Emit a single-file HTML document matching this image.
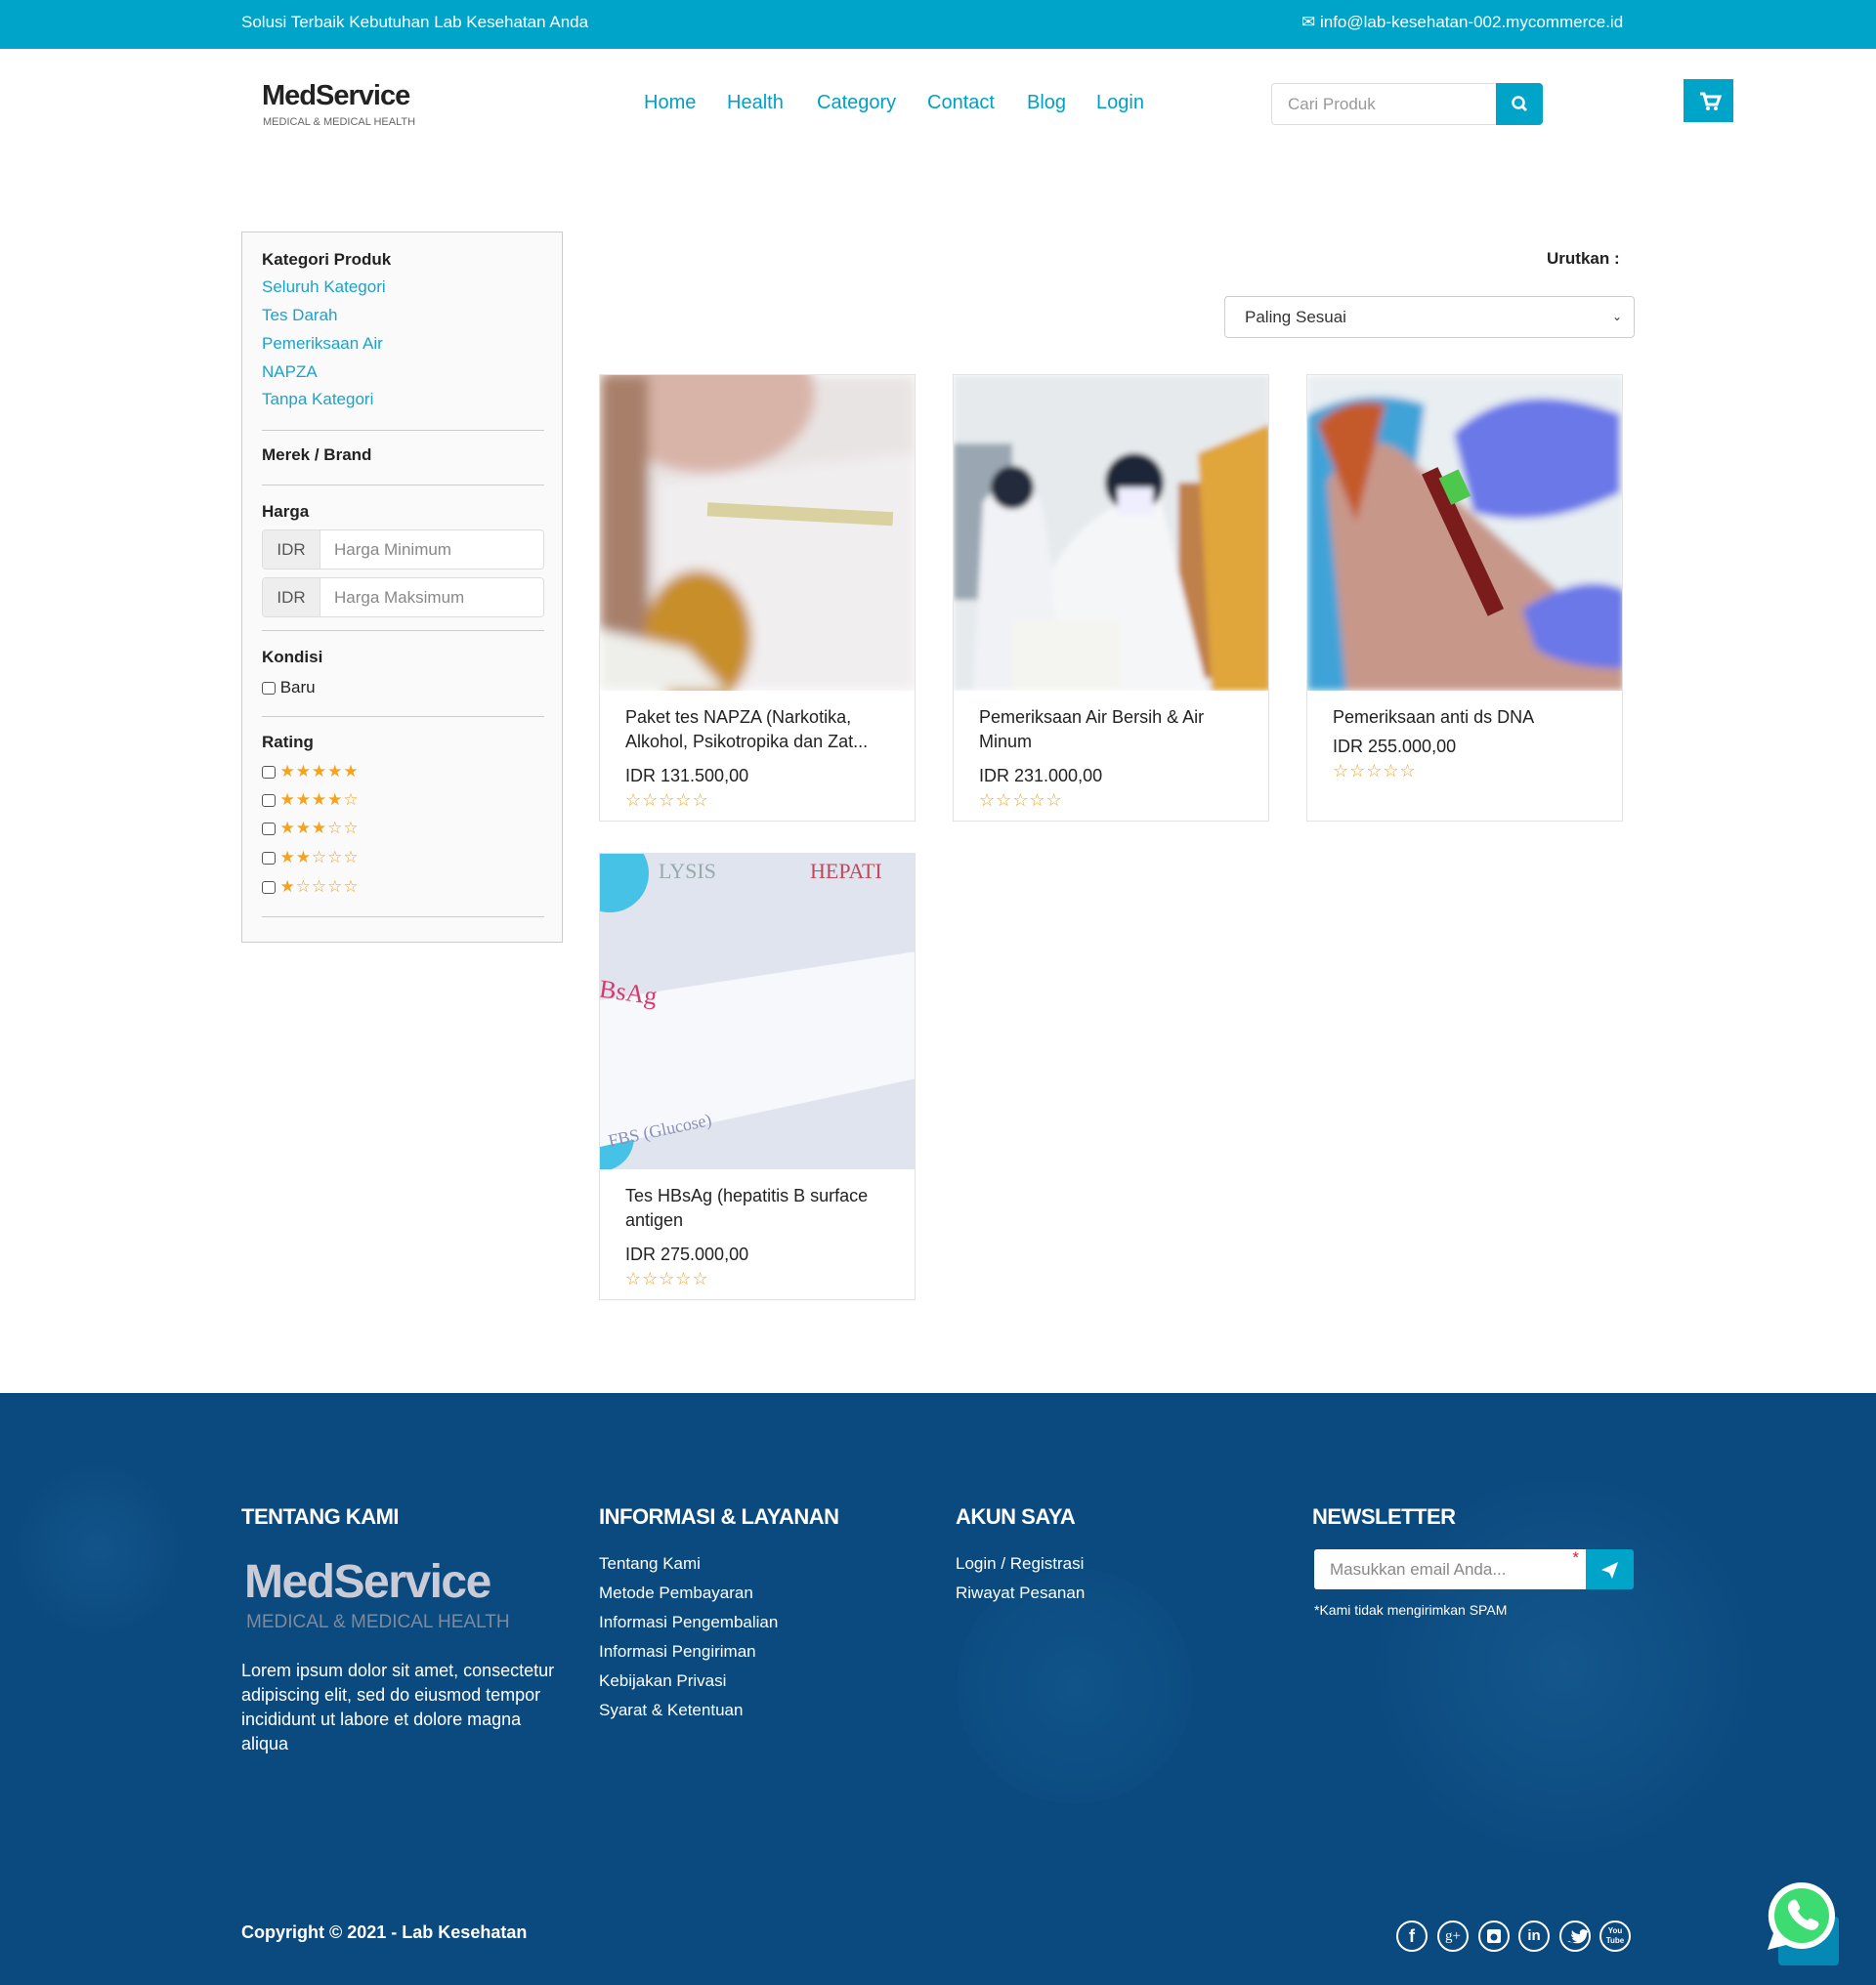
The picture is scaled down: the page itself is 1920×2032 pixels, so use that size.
<!DOCTYPE html>
<html><head><meta charset="utf-8"><style>
*{margin:0;padding:0;box-sizing:border-box}
body{width:1920px;height:2032px;position:relative;background:#fff;font-family:"Liberation Sans",sans-serif;overflow:hidden;color:#222}
.a{position:absolute;white-space:nowrap}
.top{left:0;top:0;width:1920px;height:50px;background:#01a4c9}
.nav{color:#01a0c6;font-size:20px;top:94px}
.sb{left:247px;top:237px;width:329px;height:728px;background:#fafafa;border:1px solid #ccc}
.sb .a{left:20px}
.h{font-weight:bold;font-size:17px;color:#222}
.lk{color:#1aa3cd;font-size:17px}
.hr{height:1px;width:289px;background:#ccc}
.inp{width:289px;height:41px;border:1px solid #ddd;border-radius:4px;background:#fff;overflow:hidden}
.inp span{display:inline-block;width:59px;height:39px;background:#eee;border-right:1px solid #ddd;text-align:center;line-height:39px;color:#555;font-size:17px}
.inp i{font-style:normal;color:#888;font-size:17px;padding-left:14px}
.cb{display:inline-block;width:14px;height:13px;border:1px solid #555;border-radius:3px;vertical-align:middle;background:#fff}
.st{color:#f7a21b;font-size:17px;vertical-align:middle;letter-spacing:1px}
.card{width:324px;height:458px;border:1px solid #e2e2e2;background:#fff;overflow:hidden}
.card svg{display:block}
.card .t{position:absolute;left:26px;font-size:18px;line-height:25px;color:#222;white-space:normal;width:280px}
.card .p{position:absolute;left:26px;font-size:18px;color:#222}
.card .s{position:absolute;left:26px;color:#f7a21b;font-size:18px;letter-spacing:1px}
.foot{left:0;top:1426px;width:1920px;height:606px;background:radial-gradient(circle at 1600px 280px,#14578c 0,#0b4a7f 200px,transparent 201px),radial-gradient(circle at 1100px 300px,#10548a 0,#0c4c81 120px,transparent 121px),radial-gradient(circle at 100px 160px,#12558a 0,transparent 90px),#0b4a7f}
.fh{color:#fff;font-weight:bold;font-size:22px;top:1540px;letter-spacing:-.5px}
.fl{color:#fff;font-size:17px}
.soc{width:32px;height:32px;border:2px solid #fff;border-radius:50%;color:#fff;text-align:center;font-weight:bold;font-size:15px;line-height:28px;top:1966px}
</style></head><body>
<div class="a top"></div>
<div class="a" style="left:247px;top:13px;color:#fff;font-size:17px">Solusi Terbaik Kebutuhan Lab Kesehatan Anda</div>
<div class="a" style="left:1332px;top:13px;color:#fff;font-size:17px">✉ info@lab-kesehatan-002.mycommerce.id</div>

<div class="a" style="left:268px;top:82px;font-size:29px;font-weight:bold;color:#222;letter-spacing:-1px">MedService</div>
<div class="a" style="left:269px;top:119px;font-size:11px;color:#666">MEDICAL &amp; MEDICAL HEALTH</div>
<div class="a nav" style="left:659px">Home</div>
<div class="a nav" style="left:744px">Health</div>
<div class="a nav" style="left:836px">Category</div>
<div class="a nav" style="left:949px">Contact</div>
<div class="a nav" style="left:1051px">Blog</div>
<div class="a nav" style="left:1122px">Login</div>
<div class="a" style="left:1301px;top:85px;width:232px;height:43px;border:1px solid #ddd;border-right:none;border-radius:4px 0 0 4px;color:#999;font-size:17px;line-height:41px;padding-left:16px">Cari Produk</div>
<div class="a" style="left:1531px;top:85px;width:48px;height:43px;background:#01a4c9;border-radius:0 4px 4px 0"><svg width="48" height="43"><circle cx="23" cy="20" r="5.5" fill="none" stroke="#fff" stroke-width="2.5"/><line x1="27" y1="24" x2="31" y2="28" stroke="#fff" stroke-width="3"/></svg></div>
<div class="a" style="left:1723px;top:81px;width:51px;height:44px;background:#01a4c9"><svg width="51" height="44"><path d="M17 15h4l3 11h10l3-8H22" fill="none" stroke="#fff" stroke-width="3"/><circle cx="25" cy="30" r="2" fill="#fff"/><circle cx="33" cy="30" r="2" fill="#fff"/></svg></div>

<div class="a sb">
<div class="a h" style="top:18px">Kategori Produk</div>
<div class="a lk" style="top:46px">Seluruh Kategori</div>
<div class="a lk" style="top:75px">Tes Darah</div>
<div class="a lk" style="top:104px">Pemeriksaan Air</div>
<div class="a lk" style="top:133px">NAPZA</div>
<div class="a lk" style="top:161px">Tanpa Kategori</div>
<div class="a hr" style="top:202px"></div>
<div class="a h" style="top:218px">Merek / Brand</div>
<div class="a hr" style="top:258px"></div>
<div class="a h" style="top:276px">Harga</div>
<div class="a inp" style="top:304px"><span>IDR</span><i>Harga Minimum</i></div>
<div class="a inp" style="top:353px"><span>IDR</span><i>Harga Maksimum</i></div>
<div class="a hr" style="top:407px"></div>
<div class="a h" style="top:425px">Kondisi</div>
<div class="a" style="top:456px;font-size:17px"><span class="cb"></span> Baru</div>
<div class="a hr" style="top:495px"></div>
<div class="a h" style="top:512px">Rating</div>
<div class="a" style="top:542px"><span class="cb"></span> <span class="st">★★★★★</span></div>
<div class="a" style="top:571px"><span class="cb"></span> <span class="st">★★★★☆</span></div>
<div class="a" style="top:600px"><span class="cb"></span> <span class="st">★★★☆☆</span></div>
<div class="a" style="top:630px"><span class="cb"></span> <span class="st">★★☆☆☆</span></div>
<div class="a" style="top:660px"><span class="cb"></span> <span class="st">★☆☆☆☆</span></div>
<div class="a hr" style="top:700px"></div>
</div>

<div class="a h" style="left:1583px;top:255px">Urutkan :</div>
<div class="a" style="left:1253px;top:303px;width:420px;height:43px;border:1px solid #ccc;border-radius:4px;font-size:17px;line-height:41px;padding-left:20px;color:#333">Paling Sesuai<span style="position:absolute;right:12px;font-size:12px">⌄</span></div>

<div class="a card" style="left:613px;top:383px">
<svg width="324" height="323"><defs><filter id="b"><feGaussianBlur stdDeviation="6"/></filter></defs><g filter="url(#b)"><rect width="324" height="323" fill="#e9e4e4"/><ellipse cx="110" cy="20" rx="110" ry="80" fill="#d8b4a8"/><path d="M0 0h50v323H0z" fill="#a8806a"/><path d="M60 110l264 -30v243H60z" fill="#f1eef0"/><ellipse cx="100" cy="270" rx="55" ry="70" fill="#c88e2a"/><path d="M0 260l90 20 40 43H0z" fill="#eeeeea"/></g><rect x="110" y="135" width="190" height="14" fill="#d9d2a0" transform="rotate(3 200 140)"/></svg>
<div class="t" style="top:338px">Paket tes NAPZA (Narkotika, Alkohol, Psikotropika dan Zat...</div>
<div class="p" style="top:400px">IDR 131.500,00</div>
<div class="s" style="top:425px">☆☆☆☆☆</div>
</div>
<div class="a card" style="left:975px;top:383px">
<svg width="324" height="323"><defs><filter id="b2"><feGaussianBlur stdDeviation="3"/></filter></defs><g filter="url(#b2)"><rect width="324" height="323" fill="#e6eaed"/><rect x="0" y="70" width="60" height="160" fill="#9aa7b2"/><rect x="230" y="110" width="40" height="200" fill="#c0804a"/><path d="M30 130q30-40 60 0l30 193H20z" fill="#f0f2f6"/><circle cx="60" cy="115" r="22" fill="#222a3a"/><path d="M100 200q40-70 110-80l50 203H110z" fill="#f5f6f8"/><circle cx="185" cy="110" r="30" fill="#1f2537"/><rect x="168" y="115" width="36" height="28" fill="#eef" /><path d="M250 80l74 -30v273h-60z" fill="#e0a53a"/><rect x="60" y="250" width="110" height="73" fill="#f4f4f0"/></g></svg>
<div class="t" style="top:338px">Pemeriksaan Air Bersih &amp; Air Minum</div>
<div class="p" style="top:400px">IDR 231.000,00</div>
<div class="s" style="top:425px">☆☆☆☆☆</div>
</div>
<div class="a card" style="left:1337px;top:383px">
<svg width="324" height="323"><defs><filter id="b3"><feGaussianBlur stdDeviation="4"/></filter></defs><g filter="url(#b3)"><rect width="324" height="323" fill="#e8eef2"/><path d="M0 40q60-30 120 -10l-40 293H0z" fill="#3fa3d8"/><path d="M20 110q40-70 90-20l214 190v43H40z" fill="#c7978a"/><path d="M10 50q30-30 70-20l-30 120z" fill="#c45a2a"/><path d="M150 60q60-60 170-20v80q-80 40-150 20z" fill="#6a78e8"/><path d="M220 240q60-40 104-20v80q-60 0-90-20z" fill="#6a78e8"/></g><rect x="150" y="90" width="18" height="160" fill="#7a1c1c" transform="rotate(-25 160 170)"/><rect x="140" y="100" width="22" height="30" fill="#4dc84d" transform="rotate(-25 150 115)"/></svg>
<div class="t" style="top:338px">Pemeriksaan anti ds DNA</div>
<div class="p" style="top:370px">IDR 255.000,00</div>
<div class="s" style="top:395px">☆☆☆☆☆</div>
</div>
<div class="a card" style="left:613px;top:873px">
<svg width="324" height="323"><rect width="324" height="323" fill="#dfe4ef"/><circle cx="10" cy="20" r="40" fill="#46c2e6"/><circle cx="0" cy="290" r="35" fill="#46c2e6"/><path d="M0 150l324 -50v130L0 300z" fill="#f7f8fb"/><text x="0" y="145" font-size="26" fill="#d63a6a" font-family="Liberation Serif" transform="rotate(8)">HBsAg</text><text x="215" y="25" font-size="22" fill="#c04a5a" font-family="Liberation Serif">HEPATI</text><text x="60" y="25" font-size="22" fill="#9aa" font-family="Liberation Serif">LYSIS</text><text x="10" y="300" font-size="18" fill="#8a90b8" font-family="Liberation Serif" transform="rotate(-12 10 300)">FBS (Glucose)</text></svg>
<div class="t" style="top:338px">Tes HBsAg (hepatitis B surface antigen</div>
<div class="p" style="top:400px">IDR 275.000,00</div>
<div class="s" style="top:425px">☆☆☆☆☆</div>
</div>

<div class="a foot"></div>
<div class="a fh" style="left:247px">TENTANG KAMI</div>
<div class="a fh" style="left:613px">INFORMASI &amp; LAYANAN</div>
<div class="a fh" style="left:978px">AKUN SAYA</div>
<div class="a fh" style="left:1343px">NEWSLETTER</div>
<div class="a" style="left:250px;top:1592px;font-size:48px;font-weight:bold;color:#c9ccd6;letter-spacing:-1.5px">MedService</div>
<div class="a" style="left:252px;top:1650px;font-size:19px;color:#7f8a9a">MEDICAL &amp; MEDICAL HEALTH</div>
<div class="a" style="left:247px;top:1698px;width:330px;white-space:normal;color:#fff;font-size:18px;line-height:25px">Lorem ipsum dolor sit amet, consectetur adipiscing elit, sed do eiusmod tempor incididunt ut labore et dolore magna aliqua</div>
<div class="a fl" style="left:613px;top:1586px;line-height:30px">Tentang Kami<br>Metode Pembayaran<br>Informasi Pengembalian<br>Informasi Pengiriman<br>Kebijakan Privasi<br>Syarat &amp; Ketentuan</div>
<div class="a fl" style="left:978px;top:1586px;line-height:30px">Login / Registrasi<br>Riwayat Pesanan</div>
<div class="a" style="left:1345px;top:1586px;width:279px;height:41px;background:#fff;border-radius:3px 0 0 3px;color:#888;font-size:17px;line-height:41px;padding-left:16px">Masukkan email Anda...<span style="position:absolute;right:8px;top:-12px;color:#d22">*</span></div>
<div class="a" style="left:1623px;top:1586px;width:49px;height:41px;background:#01a4c9;border-radius:0 3px 3px 0"><svg width="49" height="41"><path d="M16 21l17-8-6 17-3-6z" fill="#fff"/></svg></div>
<div class="a" style="left:1345px;top:1640px;color:#fff;font-size:14px">*Kami tidak mengirimkan SPAM</div>
<div class="a" style="left:247px;top:1968px;color:#fff;font-size:18px;font-weight:bold">Copyright © 2021 - Lab Kesehatan</div>
<div class="a soc" style="left:1429px;font-size:18px">f</div>
<div class="a soc" style="left:1471px;font-weight:normal;font-family:'Liberation Serif'">g+</div>
<div class="a soc" style="left:1513px"><svg width="28" height="28"><rect x="7" y="7" width="14" height="14" rx="2" fill="#fff"/><circle cx="14" cy="15" r="3.5" fill="#0b4a7f"/></svg></div>
<div class="a soc" style="left:1554px;font-size:15px">in</div>
<div class="a soc" style="left:1596px"><svg width="28" height="28"><path d="M6 19q5 3 10 0-4 0-5-3h2q-3-1-3-4 1 1 2 1-2-2-1-5 3 4 8 4-1-4 3-5 2 0 3 1l2-1-1 2h2l-2 2q0 7-7 10-6 1-11-2z" fill="#fff"/></svg></div>
<div class="a soc" style="left:1637px;font-size:8px;line-height:10px;padding-top:4px">You<br>Tube</div>
<div class="a" style="left:1820px;top:1962px;width:62px;height:50px;background:#0588b4;border-radius:4px"></div>
<div class="a" style="left:1806px;top:1924px"><svg width="80" height="76"><path d="M38 3a34 34 0 1 1-16 64L3 72l6-17A34 34 0 0 1 38 3z" fill="#fff"/><circle cx="38" cy="37" r="28" fill="#3ddc72"/><path d="M27 22q4-3 6 0l3 6q1 2-2 4 3 7 10 10 2-3 4-2l6 3q3 2 0 6-4 5-12 1-12-6-17-17-3-7 2-11z" fill="#fff"/></svg></div>
</body></html>
